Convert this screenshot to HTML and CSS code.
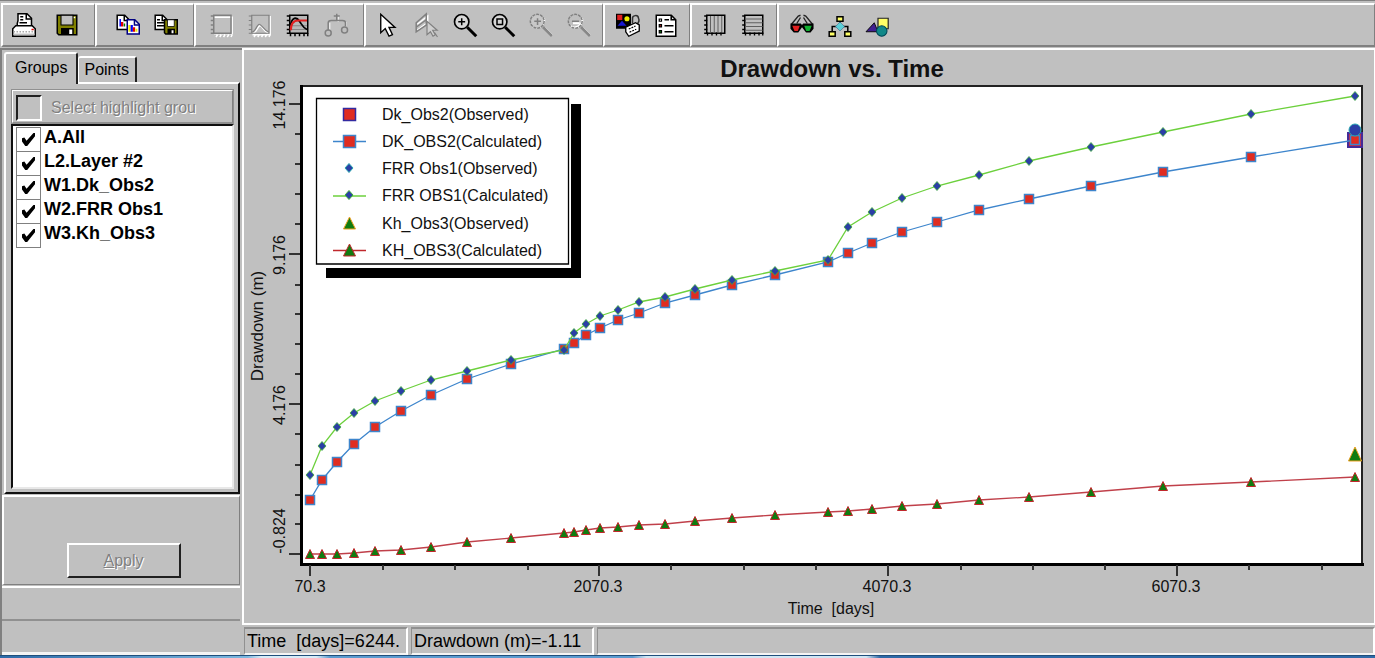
FILE: index.html
```html
<!DOCTYPE html>
<html lang="en">
<head>
<meta charset="utf-8">
<title>Drawdown vs. Time</title>
<link rel="stylesheet" href="styles.css">
</head>
<body>
<header class="toolbar" role="toolbar" aria-label="Graph tools">
  <div class="group group-file">
    <button class="tool" aria-label="Print"><svg class="icon" viewBox="0 0 16 16"><path d="M4 .5h6l3 3v6H3.500V7L4 5z" fill="#fff" stroke="#000"/><path d="M9.500.5v3.500H13M5.500 2.500h2M5.500 4.500h2M5 6.500h5" fill="none" stroke="#000"/><path d="M2.500 8.500h11l2 2v5H.5v-5z" fill="#fff" stroke="#000"/><path d="M1 12.500h14" stroke="#aaa" stroke-dasharray="1 1"/><path d="M1 14.200h14" stroke="#c0c0c0"/><path d="M13 11h1.500" stroke="#e00000"/></svg></button>
    <button class="tool" aria-label="Save"><svg class="icon" viewBox="0 0 16 16"><path d="M1.500 1.500h13v13H2.500l-1-1z" fill="#808000" stroke="#000"/><path d="M4 1.500h8v6.500H4z" fill="#c0c0c0" stroke="#000" stroke-width=".7"/><path d="M4 10h8.500v4.500H4z" fill="#000"/><path d="M9.500 11h2v3h-2zM12.500 2.500h1v1h-1z" fill="#fff"/></svg></button>
  </div>
  <div class="group group-copy">
    <button class="tool" aria-label="Copy graph"><svg class="icon" viewBox="0 0 16 16"><path d="M.8 1.500h5l3 3v6.500h-8z" fill="#fff" stroke="#000"/><path d="M5.500 1.500V5h3" fill="none" stroke="#000"/><path d="M2.800 4v5" stroke="#00f"/><path d="M4.100 6v3" stroke="#e00000" stroke-width="1.500"/><path d="M5.600 7v2" stroke="#008000"/><path d="M7.500 4.500h5l3 3v6.500h-8z" fill="#fff" stroke="#000080"/><path d="M12.300 4.500V8h3" fill="none" stroke="#000080"/><path d="M9 8v4.500" stroke="#ee0" stroke-width="1.500"/><path d="M10.500 8v4.500" stroke="#00f" stroke-width="1.500"/><path d="M12 9.500v3" stroke="#e00000" stroke-width="1.500"/><path d="M13.600 10.500v2" stroke="#ee0" stroke-width="1.300"/></svg></button>
    <button class="tool" aria-label="Copy and save"><svg class="icon" viewBox="0 0 16 16"><path d="M.8 1.500h5l3 3v6.500h-8z" fill="#fff" stroke="#000"/><path d="M5.500 1.500V5h3M2 4.500h2M2 6.500h5M2 8.500h5" fill="none" stroke="#000"/><path d="M7 4.500h8.500v9.500H7.800L7 13.200z" fill="#808000" stroke="#000"/><path d="M9 4.500h4.500V9H9z" fill="#fff" stroke="#000" stroke-width=".5"/><path d="M9 10.500h5V14H9z" fill="#000"/><path d="M11.700 11.500h1.300v2h-1.300z" fill="#fff"/></svg></button>
  </div>
  <div class="group group-plot">
    <button class="tool" disabled aria-label="Frame"><svg class="icon" viewBox="0 0 16 16"><path d="M2.800 2.800h12v11h-12M4 16l1-1.500M6.500 16l1-1.500M9 16l1-1.500M11.500 16l1-1.500M14 16l.8-1.500" fill="none" stroke="#fff"/><path d="M2.500 1.500h11.500v12H2.500zM.5 2h2M.5 5h2M.5 8h2M.5 11h2M.5 13.500h2" fill="none" stroke="#808080"/></svg></button>
    <button class="tool" disabled aria-label="Curve"><svg class="icon" viewBox="0 0 16 16"><path d="M14.800 2v12.500H3M4 16l1-1.500M6.500 16l1-1.500M9 16l1-1.500M11.500 16l1-1.500M14 16l.8-1.500M3.500 13.500c2 0 3-5 4.500-5s2.500 4 5.500 5" fill="none" stroke="#fff"/><path d="M2.500 1.500h11.500v12H2.500zM.5 2h2M.5 5h2M.5 8h2M.5 11h2M.5 13.500h2M3 12.500c2 0 3-5 4.500-5s3 4 6 5" fill="none" stroke="#808080" stroke-width=".8"/></svg></button>
    <button class="tool" aria-label="Compare curves"><svg class="icon" viewBox="0 0 16 16"><path d="M2.500 1.500h12v12h-12z" fill="#b8b8b8" stroke="#000"/><path d="M3 8.500h11M3 11h11" stroke="#808080" stroke-width=".6"/><path d="M.5 2h2M.5 5h2M.5 8h2M.5 11h2M.5 13.500h2M3 15.500v-2M6 15.500v-2M9 15.500v-2M12 15.500v-2M14.500 15.500v-2" stroke="#000"/><path d="M3 8.500c1-6 4-6 6-3s2.500 4.500 5 5.500" fill="none" stroke="#000" stroke-width="1.200"/><path d="M3.200 11.500c0-5 2.300-6.500 5-6.500H14" fill="none" stroke="#e02020" stroke-width="1.400"/></svg></button>
    <button class="tool" disabled aria-label="Balance"><svg class="icon" viewBox="0 0 16 16"><g fill="none" stroke="#e8e8e8"><path d="M9.500 2v4M3.800 6.500v4.500M14.700 6v3"/></g><g fill="none" stroke="#808080"><path d="M8.500.5V5M6.500 2h4M2.800 11.500V6.500q0-1.500 2-1.500h7.500q2 0 2 1.500V9"/><circle cx="2.800" cy="13.300" r="2"/><circle cx="13.700" cy="11.300" r="2"/></g></svg></button>
  </div>
  <div class="group group-view">
    <button class="tool" aria-label="Select"><svg class="icon" viewBox="0 0 16 16"><path d="M2.500.8v12.400l3-2.800 2.500 5 2.300-1-2.300-4.800h4z" fill="#fff" stroke="#000" stroke-width=".9"/></svg></button>
    <button class="tool" disabled aria-label="Select layer"><svg class="icon" viewBox="0 0 16 16"><path d="M1.500 7.500l7-5.500v6M1.500 11.500l6-4.500" fill="none" stroke="#fff"/><path d="M.8 6.500L7.500.6V8L.8 12.500zM.8 9.500L7.500 4.500" fill="none" stroke="#808080"/><path d="M8 5.500v9l2.300-2 1.700 3 1.500-1-1.700-3h3zM13 13l2 3" fill="#d0d0d0" stroke="#808080" stroke-width=".8"/></svg></button>
    <button class="tool" aria-label="Zoom in"><svg class="icon" viewBox="0 0 16 16"><circle cx="5.800" cy="5.800" r="4.800" fill="#d8d8d8" stroke="#000" stroke-width="1.100"/><path d="M3.500 5.800h4.600M5.800 3.500v4.600" stroke="#000"/><path d="M9.500 9.500l6 6" stroke="#000" stroke-width="2"/></svg></button>
    <button class="tool" aria-label="Zoom window"><svg class="icon" viewBox="0 0 16 16"><circle cx="5.800" cy="5.800" r="4.800" fill="#d8d8d8" stroke="#000" stroke-width="1.100"/><path d="M4 4h3.700v3.700H4z" fill="none" stroke="#000"/><path d="M9.500 9.500l6 6" stroke="#000" stroke-width="2"/></svg></button>
    <button class="tool" disabled aria-label="Zoom previous"><svg class="icon" viewBox="0 0 16 16"><path d="M10.500 10l5 5M2 8.500a5 5 0 0 0 8-5" fill="none" stroke="#fff" stroke-width="1.400"/><circle cx="5.500" cy="5.500" r="4.600" fill="#c8c8c8" stroke="#808080" stroke-dasharray="2 .6"/><path d="M3.500 5.500h4.500M5.700 3.500V8" stroke="#808080"/><path d="M9.300 9.300l6 6" stroke="#888" stroke-width="1.800"/></svg></button>
    <button class="tool" disabled aria-label="Zoom out"><svg class="icon" viewBox="0 0 16 16"><path d="M10.500 10l5 5M2 8.500a5 5 0 0 0 8-5M4 6.800h4.500" fill="none" stroke="#fff" stroke-width="1.400"/><circle cx="5.500" cy="5.500" r="4.600" fill="none" stroke="#808080" stroke-dasharray="2 .6"/><path d="M3.300 5.500h4.700" stroke="#808080"/><path d="M9.300 9.300l6 6" stroke="#888" stroke-width="1.800"/></svg></button>
  </div>
  <div class="group">
    <button class="tool" aria-label="Symbols"><svg class="icon" viewBox="0 0 16 16"><path d="M0 .5h10v10H0z"/><path d="M.8 1.200h3.400v3.500H.8z" fill="#e02020"/><circle cx="7.300" cy="3.800" r="1.700" fill="#ee0"/><path d="M1 8.500l3-3.300 3 3.300z" fill="#1818d0"/><path d="M11 7V4a2 2 0 0 1 4-.5q1 2-1 4" fill="none" stroke="#333"/><path d="M6.500 9.500l6.500-3 2.500 1.500v4l-7 3.500-2-3z" fill="#fff" stroke="#000" stroke-width=".9"/><path d="M8.500 10.700l4.500-2M9 12.800l4.500-2" stroke="#000" stroke-width=".8" stroke-dasharray="1.300 .7"/></svg></button>
    <button class="tool" aria-label="Legend"><svg class="icon" viewBox="0 0 16 16"><path d="M1.500 1.500h10l3 3v11h-13z" fill="#fff" stroke="#000"/><path d="M11.500 1.500v3h3M7 4.500h3M7 8.500h6M7 12.500h6" fill="none" stroke="#000" stroke-width="1.100"/><path d="M3.500 4h1.500v1.500H3.500z" fill="#fff" stroke="#000" stroke-width=".8"/><path d="M3.500 7.700h1.500v1.500H3.500z" fill="#e02020" stroke="#000" stroke-width=".8"/><path d="M3.500 11.700h1.500v1.500H3.500z" fill="#0a0" stroke="#000" stroke-width=".8"/></svg></button>
  </div>
  <div class="group">
    <button class="tool" aria-label="Vertical grid"><svg class="icon" viewBox="0 0 16 16"><path d="M2.500 1.500h12v12h-12z" fill="none" stroke="#000"/><path d="M5 2v11.500M7.500 2v11.500M10 2v11.500M12.500 2v11.500" stroke="#555" stroke-width=".6"/><path d="M.8 2h2M.8 5h2M.8 8h2M.8 11h2M.8 13.500h2M3 15v-2M6 15v-2M9 15v-2M12 15v-2" stroke="#000" stroke-width=".9"/></svg></button>
    <button class="tool" aria-label="Horizontal grid"><svg class="icon" viewBox="0 0 16 16"><path d="M2.500 1.500h12v12h-12z" fill="none" stroke="#000"/><path d="M3 4h11.500M3 6.500h11.500M3 9h11.500M3 11.500h11.500" stroke="#555" stroke-width=".6"/><path d="M.8 2h2M.8 5h2M.8 8h2M.8 11h2M.8 13.500h2M3 15v-2M6 15v-2M9 15v-2M12 15v-2M14.500 15v-2" stroke="#000" stroke-width=".9"/></svg></button>
  </div>
  <div class="group group-last">
    <button class="tool" aria-label="3D view"><svg class="icon" viewBox="0 0 16 16"><path d="M1 7.500l4.500-5.500 1.500-.5M15 7.500L10.500 2 9 1.500M4.500 7l2.500-4M11.500 7L9 3" fill="none" stroke="#222" stroke-width=".9"/><path d="M.3 7h6.900l.8 1 .8-1h6.900v3.500l-2 2.500h-3L8 9.500 5.500 13h-3l-2.200-2.500z" fill="#000"/><path d="M1.500 8.500h5l-1.300 3.500H3z" fill="#e02020"/><path d="M9.500 8.500h5L13 12h-2.200z" fill="#10b030"/></svg></button>
    <button class="tool" aria-label="Hierarchy"><svg class="icon" viewBox="0 0 16 16"><path d="M8 5v2M6 9H2.800v3M10 9h3.200v3" fill="none" stroke="#000"/><path d="M6 2.500h4v3H6zM.8 12.500h4v3h-4zM11.200 12.500h4v3h-4z" fill="#ff6" stroke="#000"/><path d="M8 6l3 3-3 3-3-3z" fill="#5cd0d8" stroke="#468" stroke-width=".4"/></svg></button>
    <button class="tool" aria-label="Shapes"><svg class="icon" viewBox="0 0 16 16"><path d="M8 3.500h6.800v7H8z" fill="#ff6" stroke="#222" stroke-width=".8"/><path d="M0 12.500l5.500-6 2.500 6z" fill="#402090" stroke="#000" stroke-width=".6"/><circle cx="10.500" cy="12" r="3.500" fill="#108888" stroke="#045" stroke-width=".7"/></svg></button>
  </div>
</header>

<div class="workspace">
  <aside class="sidebar">
    <div class="tabs" role="tablist">
      <button class="tab tab-active" role="tab" aria-selected="true">Groups</button>
      <button class="tab" role="tab" aria-selected="false">Points</button>
    </div>
    <section class="page" role="tabpanel" aria-label="Groups">
      <label class="highlight"><input class="highlight-box" type="checkbox" disabled>Select highlight grou</label>
      <div class="list">
        <label class="row"><input class="check" type="checkbox" checked>A.All</label>
        <label class="row"><input class="check" type="checkbox" checked>L2.Layer #2</label>
        <label class="row"><input class="check" type="checkbox" checked>W1.Dk_Obs2</label>
        <label class="row"><input class="check" type="checkbox" checked>W2.FRR Obs1</label>
        <label class="row"><input class="check" type="checkbox" checked>W3.Kh_Obs3</label>
      </div>
    </section>
    <div class="actions"><button class="apply" disabled><u>A</u>pply</button></div>
    <div class="strip"></div>
    <div class="strip strip-sunken"></div>
  </aside>

  <main class="content">
    <div class="chart-panel">
      <svg class="chart" viewBox="244 50 1130 573" role="img" aria-label="Drawdown vs. Time">
        <defs>
          <marker id="square" markerUnits="userSpaceOnUse" markerWidth="12" markerHeight="12" refX="6" refY="6"><rect x="1.500" y="1.500" width="9" height="9" fill="#e02c20" stroke="#3d85cc" stroke-width="1.500"/></marker>
          <marker id="diamond" markerUnits="userSpaceOnUse" markerWidth="12" markerHeight="12" refX="6" refY="6"><path d="M6 1.500l4 4.500-4 4.500-4-4.500z" fill="#2b3fa5" stroke="#3fae3a" stroke-width=".8"/></marker>
          <marker id="triangle" markerUnits="userSpaceOnUse" markerWidth="14" markerHeight="12" refX="7" refY="6"><path d="M7 1.500l4.500 9h-9z" fill="#107c10" stroke="#c0282c"/></marker>
        </defs>
        <text class="title" x="832" y="77">Drawdown vs. Time</text>
        <rect x="301" y="86" width="1062" height="478" fill="#fff"/>
        <g class="axes">
          <path class="frame" d="M300 86H1363M1362 85V564"/>
          <path class="axis" d="M301 85V566M300 564H1364"/>
          <path class="ticks" d="M310 565V576M599 565V576M888 565V576M1177 565V576M383 565V570M455 565V570M528 565V570M671 565V570M744 565V570M816 565V570M961 565V570M1033 565V570M1105 565V570M1249 565V570M1322 565V570"/>
          <path class="ticks" d="M289 104H300M289 254H300M289 404H300M289 554H300M295 134H300M295 164H300M295 194H300M295 224H300M295 285H300M295 314H300M295 344H300M295 374H300M295 434H300M295 465H300M295 495H300M295 524H300"/>
        </g>
        <g class="label">
          <text x="310" y="592">70.3</text><text x="598" y="592">2070.3</text><text x="887" y="592">4070.3</text><text x="1176" y="592">6070.3</text>
          <text x="831" y="614">Time&#160; [days]</text>
          <text transform="translate(285 105) rotate(-90)">14.176</text>
          <text transform="translate(285 255) rotate(-90)">9.176</text>
          <text transform="translate(285 405) rotate(-90)">4.176</text>
          <text transform="translate(285 531) rotate(-90)">-0.824</text>
          <text class="axis-name" transform="translate(263 326) rotate(-90)">Drawdown (m)</text>
        </g>
        <rect x="1348" y="133" width="14" height="14" fill="#d02038" stroke="#452a98" stroke-width="2"/>
        <polyline class="line line-dk" points="310,500 322,480 337,462 354,444 375,427 401,411 431,395 467,379 511,364 564,349 574,343 586,335 600,328 618,320 639,313 665,303 695,295 732,285 775,275 828,262 848,253 872,243 902,232 937,222 979,210 1029,199 1091,186 1163,172 1251,157 1355,140"/>
        <circle cx="1355" cy="130" r="6" fill="#2b3fa5" stroke="#27a6b0"/>
        <polyline class="line line-frr" points="310,475 322,446 337,427 354,413 375,401 401,391 431,380 467,371 511,360 564,350 574,333 586,324 600,316 618,310 639,302 665,297 695,289 732,280 775,271 828,260 848,227 872,212 902,198 937,186 979,175 1029,161 1091,147 1163,132 1251,114 1355,96"/>
        <path d="M1355 447l6.500 14h-13z" fill="#107c10" stroke="#f0a020"/>
        <polyline class="line line-kh" points="310,554 322,554 337,554 354,553 375,551 401,550 431,547 467,542 511,538 564,533 574,532 586,530 600,528 618,527 639,525 665,524 695,521 732,518 775,515 828,512 848,511 872,509 902,506 937,504 979,500 1029,497 1091,492 1163,486 1251,482 1355,477"/>
        <g class="legend">
          <path d="M326 104H581V278H326z" fill="#000"/>
          <path d="M316 98H571V268H316z" fill="#fff"/>
          <path d="M316.500 98.500H568.500V264H316.500z" fill="#fff" stroke="#000" stroke-width="1.300"/>
          <rect x="343.500" y="108.500" width="12" height="12" fill="#e02c20" stroke="#322aa0" stroke-width="1.500"/>
          <path d="M333 141.500h33" stroke="#3d85cc" stroke-width="1.500"/>
          <rect x="343.500" y="135.500" width="12" height="12" fill="#e02c20" stroke="#3d85cc" stroke-width="1.500"/>
          <path d="M349 163.500l4 4.500-4 4.500-4-4.500z" fill="#2b3fa5" stroke="#27a6b0"/>
          <path d="M333 196h33" stroke="#6cd03c" stroke-width="1.500"/>
          <path d="M349 190.500l4 4.500-4 4.500-4-4.500z" fill="#2b3fa5" stroke="#3fae3a"/>
          <path d="M349.500 217l6 12h-12z" fill="#107c10" stroke="#f0a020"/>
          <path d="M333 250.500h33" stroke="#c0282c" stroke-width="1.500"/>
          <path d="M349.500 244l6 12h-12z" fill="#107c10" stroke="#c0282c"/>
          <text x="382" y="120">Dk_Obs2(Observed)</text>
          <text x="382" y="147">DK_OBS2(Calculated)</text>
          <text x="382" y="174">FRR Obs1(Observed)</text>
          <text x="382" y="201">FRR OBS1(Calculated)</text>
          <text x="382" y="229">Kh_Obs3(Observed)</text>
          <text x="382" y="256">KH_OBS3(Calculated)</text>
        </g>
      </svg>
    </div>
    <footer class="status">
      <div class="cell cell-time">Time&#160; [days]=6244.</div>
      <div class="cell cell-value">Drawdown (m)=-1.11</div>
      <div class="cell cell-rest"></div>
    </footer>
  </main>
</div>
<div class="taskbar"></div>
</body>
</html>
```

FILE: styles.css
```css
* { box-sizing: border-box; }

body {
  margin: 0;
  min-height: 100vh;
  display: flex;
  flex-direction: column;
  background: #c0c0c0;
  color: #000;
  font: 16px/20px "Liberation Sans", Arial, sans-serif;
}

button, input { font: inherit; color: inherit; margin: 0; }

/* Toolbar */
.toolbar {
  display: flex;
  height: 48px;
  padding: 2px 0 1px 1px;
  border-top: 1px solid #808080;
  background: #c0c0c0;
}
.group {
  display: flex;
  align-items: center;
  height: 44px;
  padding: 0 4px;
  border: 1px solid #808080;
  border-left: 2px solid #fff;
  border-top: 2px solid #fff;
  border-bottom-width: 2px;
}
.group-file { gap: 5px; padding: 0 8px 0 2px; }
.group-copy { padding: 0 8px 0 12px; }
.group-plot { padding: 0 8px 0 7px; }
.group-last { flex: 1; }
.tool {
  display: flex;
  justify-content: center;
  width: 38px;
  padding: 0;
  border: 0;
  background: none;
}
.icon { width: 24px; height: 24px; overflow: visible; }

.workspace { flex: 1; display: flex; min-height: 0; }

/* Sidebar */
.sidebar {
  width: 242px;
  display: flex;
  flex-direction: column;
  padding-right: 2px;
  border-left: 2px solid #808080;
  border-top: 2px solid #808080;
}
.tabs { display: flex; align-items: flex-end; height: 32px; padding-left: 2px; }
.tab {
  height: 26px;
  padding: 0 6px 0 5px;
  border: solid;
  border-width: 2px 2px 0 1px;
  border-color: #fff #202020 #fff #fff;
  border-radius: 3px 3px 0 0;
  background: #c0c0c0;
}
.tab-active {
  z-index: 1;
  height: 32px;
  margin-bottom: -2px;
  padding: 0 9px 2px;
  border-left-width: 2px;
}
.page {
  flex: 1;
  display: flex;
  flex-direction: column;
  margin-left: 2px;
  padding: 5px 4px 3px 5px;
  border: 2px solid;
  border-color: #fff #101010 #101010 #fff;
}
.highlight {
  display: flex;
  align-items: center;
  gap: 9px;
  height: 35px;
  padding: 2px 0 0 3px;
  border: 2px solid;
  border-color: #fff #808080 #909090 #fff;
  outline: 1px solid #909090;
  outline-offset: -1px;
  color: #808080;
  text-shadow: 1px 1px 0 #fff;
  white-space: nowrap;
}
.highlight-box {
  appearance: none;
  width: 26px;
  height: 26px;
  border: 2px solid;
  border-color: #202020 #fff #fff #202020;
}
.list {
  flex: 1;
  padding: 1px 0 0 3px;
  border: 2px solid;
  border-color: #101010 #e8e8e8 #e8e8e8 #101010;
  background: #fff;
  font-size: 18px;
  font-weight: bold;
}
.row { display: flex; gap: 3px; height: 24px; line-height: 20px; }
.check {
  appearance: none;
  display: grid;
  place-items: center;
  width: 25px;
  height: 25px;
  border: 1px solid #808080;
}
.check:checked::before {
  content: "";
  width: 13px;
  height: 13px;
  background: #000;
  clip-path: polygon(0 40%, 18% 35%, 35% 60%, 88% 0, 100% 0, 100% 25%, 40% 100%, 25% 100%, 0 65%);
}
.actions {
  display: flex;
  justify-content: center;
  align-items: flex-start;
  height: 90px;
  margin-top: 1px;
  padding: 46px 0 0 4px;
  border: 2px solid #fff;
  border-right: 1px solid #808080;
  border-bottom: 1px solid #808080;
}
.apply {
  width: 114px;
  height: 35px;
  padding: 0;
  border: 2px solid;
  border-color: #fff #202020 #202020 #fff;
  background: #c0c0c0;
  color: #808080;
  text-shadow: 1px 1px 0 #fff;
}
.strip { height: 33px; margin-top: 1px; border-top: 2px solid #fff; }
.strip-sunken {
  height: 36px;
  margin-top: 0;
  border-top: 2px solid #909090;
  border-bottom: 3px solid #f4f4f4;
}

/* Chart */
.content { flex: 1; min-width: 0; display: flex; flex-direction: column; }
.chart-panel {
  flex: 1;
  min-height: 0;
  display: flex;
  border: 2px solid #fff;
  border-right-width: 1px;
}
.chart { display: block; width: 100%; height: 100%; }
.chart text { fill: #111; }
.title { font-size: 24px; font-weight: bold; text-anchor: middle; }
.label { font-size: 16px; text-anchor: middle; }
.axis-name { font-size: 17px; }
.legend { font-size: 16px; }
.axes { fill: none; stroke: #000; shape-rendering: crispEdges; }
.frame { stroke: #222; stroke-width: 2px; }
.axis { stroke-width: 3px; }
.ticks { stroke: #333; stroke-width: 2px; }
.line { fill: none; stroke-width: 1.3; }
.line-dk { stroke: #3d85cc; marker: url(#square); }
.line-frr { stroke: #6cd03c; marker: url(#diamond); }
.line-kh { stroke: #c0404a; marker: url(#triangle); }

/* Status bar */
.status { display: flex; gap: 3px; height: 30px; padding: 2px 0 0 2px; }
.cell {
  padding: 0 2px;
  border: 2px solid;
  border-color: #909090 #fff #f4f4f4 #909090;
  border-left-width: 1px;
  font-size: 18px;
  line-height: 24px;
  white-space: nowrap;
  overflow: hidden;
}
.cell-time { width: 164px; }
.cell-value { width: 183px; }
.cell-rest { flex: 1; }

.taskbar {
  height: 3px;
  border-top: 1px solid #1f4f7c;
  background: linear-gradient(90deg, #2c6aa8, #7cb8e0 18%, #d8ecf8 19%, #d8ecf8 23%, #5a9bd0 24%, #5a9bd0 46%, #d0e6f4 47%, #d0e6f4 63%, #2f6aa8 64%, #2f6aa8);
}
```
